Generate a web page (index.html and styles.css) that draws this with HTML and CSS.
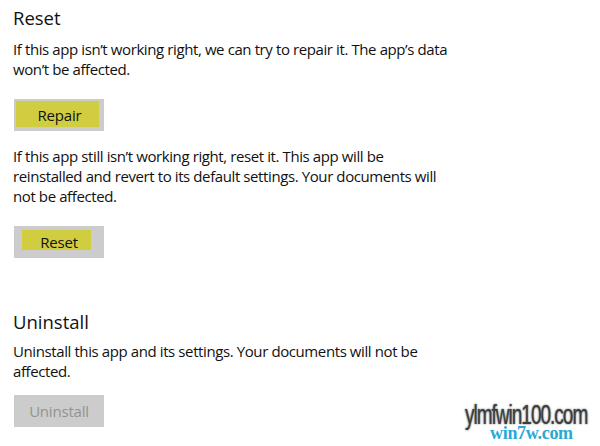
FILE: index.html
```html
<!DOCTYPE html>
<html>
<head>
<meta charset="utf-8">
<link rel="stylesheet" href="styles.css">
</head>
<body>
<main class="page">
  <section class="group">
    <h2 class="title">Reset</h2>
    <p class="desc">If this app isn’t working right, we can try to repair it. The app’s data<br>won’t be affected.</p>
    <button class="btn btn-repair"><span class="hl">Repair</span></button>
    <p class="desc desc-after">If this app still isn’t working right, reset it. This app will be<br>reinstalled and revert to its default settings. Your documents will<br>not be affected.</p>
    <button class="btn btn-reset"><span class="hl">Reset</span></button>
  </section>
  <section class="group group-uninstall">
    <h2 class="title">Uninstall</h2>
    <p class="desc">Uninstall this app and its settings. Your documents will not be<br>affected.</p>
    <button class="btn btn-disabled" disabled><span class="plain">Uninstall</span></button>
  </section>
</main>
<div class="watermark">
  <span class="wm-back">win7w.com</span>
  <span class="wm-front">ylmfwin100.com</span>
</div>
</body>
</html>
```
FILE: styles.css
```css
html, body {
  margin: 0;
  padding: 0;
  background: #fff;
}
body {
  width: 600px;
  height: 446px;
  overflow: hidden;
  position: relative;
  font-family: "Open Sans", "Noto Sans", sans-serif;
  color: #111;
}
.page {
  padding: 5px 0 0 13px;
}
.title {
  margin: 0;
  font-size: 18.5px;
  font-weight: 400;
  line-height: 26px;
  color: #111;
}
.desc {
  margin: 8px 0 0 0;
  font-size: 15px;
  letter-spacing: -0.4px;
  line-height: 20px;
  white-space: nowrap;
}
.desc-after {
  margin-top: 15px;
}
.btn {
  display: flex;
  align-items: flex-start;
  margin: 20px 0 0 1px;
  width: 90px;
  height: 32px;
  border: none;
  padding: 0;
  background: #cccccc;
  font-family: inherit;
  font-size: 15px;
  letter-spacing: -0.2px;
  color: #111;
}
.hl {
  display: block;
  background: #d0cd40;
  text-align: center;
  box-sizing: border-box;
}
.btn-repair .hl {
  width: 83px;
  height: 26px;
  line-height: 28px;
  margin: 2px 0 0 2px;
  padding-left: 4px;
}
.btn-reset .hl {
  width: 69px;
  height: 20px;
  line-height: 24px;
  margin: 4px 0 0 8px;
  padding-left: 5px;
}
.plain {
  display: block;
  width: 100%;
  line-height: 32px;
  text-align: center;
}
.group-uninstall {
  margin-top: 51px;
}
.group-uninstall .desc {
  margin-top: 6px;
}
.group-uninstall .btn {
  margin-top: 14px;
}
.btn-disabled {
  color: #939393;
}
.watermark {
  position: absolute;
  left: 0;
  top: 0;
  width: 600px;
  height: 446px;
  pointer-events: none;
}
.wm-back {
  position: absolute;
  left: 490px;
  top: 424px;
  font-family: "Liberation Serif", serif;
  font-weight: 700;
  font-size: 18px;
  line-height: 1;
  letter-spacing: -0.3px;
  color: #27a9d6;
}
.wm-front {
  position: absolute;
  left: 465px;
  top: 401px;
  font-family: "Liberation Sans", sans-serif;
  font-size: 28px;
  line-height: 1;
  letter-spacing: -1.5px;
  color: #3d3d3d;
  transform: scaleX(0.68);
  transform-origin: 0 0;
  white-space: nowrap;
  text-shadow: 0 0 1px #8a8a8a, 0 0 2px #9a9a9a, 0 0 3px #b5b5b5;
}
```
